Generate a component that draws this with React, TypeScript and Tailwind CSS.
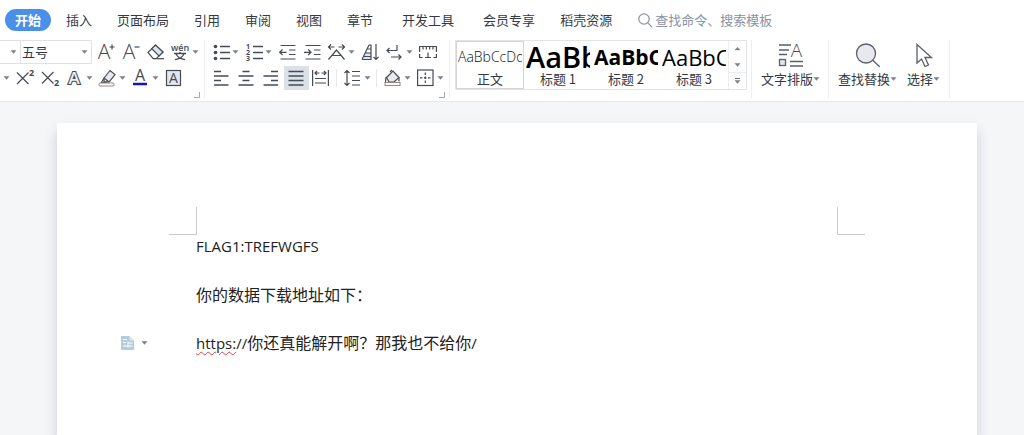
import type { ReactNode } from 'react';
import clsx from 'clsx';

interface ToolProps {
  label: string;
  caret?: boolean;
  active?: boolean;
  children: ReactNode;
}

interface GalleryStyle {
  name: string;
  sample: string;
  preview: string;
}

const TABS = [
  { label: '插入' },
  { label: '页面布局' },
  { label: '引用' },
  { label: '审阅' },
  { label: '视图' },
  { label: '章节' },
  { label: '开发工具', spaced: true },
  { label: '会员专享', spaced: true },
  { label: '稻壳资源' },
];

const STYLES: GalleryStyle[] = [
  { name: '正文', sample: 'AaBbCcDd', preview: 'text-sm font-light text-[#111]' },
  { name: '标题 1', sample: 'AaBb', preview: 'text-[29px] font-semibold text-black' },
  { name: '标题 2', sample: 'AaBbC', preview: 'text-[21px] font-bold text-black' },
  { name: '标题 3', sample: 'AaBbC', preview: 'text-[22px] font-medium text-black' },
];

function Caret() {
  return (
    <svg width="7" height="4" viewBox="0 0 7 4" className="shrink-0" aria-hidden="true">
      <path d="M.5 .3h6L3.500 3.700z" fill="#7d828a" />
    </svg>
  );
}

function Icon({ children }: { children: ReactNode }) {
  return (
    <svg
      width="18"
      height="18"
      viewBox="0 0 18 18"
      fill="none"
      stroke="#454b55"
      strokeWidth="1.2"
      className="shrink-0 overflow-visible font-['Open_Sans','Noto_Sans_CJK_SC',sans-serif]"
      aria-hidden="true"
    >
      {children}
    </svg>
  );
}

// Letters inside icons are filled text, not strokes
function Glyph({ x, y, size, weight = 400, children }: { x: number; y: number; size: number; weight?: number; children: string }) {
  return (
    <text x={x} y={y} fontSize={size} fontWeight={weight} textAnchor="middle" fill="#454b55" stroke="none">
      {children}
    </text>
  );
}

function Tool({ label, caret, active, children }: ToolProps) {
  return (
    <button
      type="button"
      aria-label={label}
      aria-pressed={active}
      className={clsx(
        'flex h-6 shrink-0 items-center gap-[2px] pl-[3px]',
        caret ? 'w-[33px]' : 'w-[25px]',
        active && 'bg-[#dce1e8]'
      )}
    >
      <Icon>{children}</Icon>
      {caret && <Caret />}
    </button>
  );
}

function Separator() {
  return <span className="mr-1 ml-[2px] h-[18px] w-px shrink-0 bg-[#e6e8eb]" />;
}

function Launcher({ label }: { label: string }) {
  return (
    <button type="button" aria-label={label} className="mt-[2px] mr-[2px] self-end">
      <svg width="6" height="6" viewBox="0 0 6 6" fill="none" stroke="#a3a8af" aria-hidden="true">
        <path d="M5.5 0v5.5H0" />
      </svg>
    </button>
  );
}

function BigTool({ label, children }: { label: string; children: ReactNode }) {
  return (
    <button type="button" className="flex shrink-0 flex-col items-center gap-px pt-[2px]">
      <svg width="28" height="26" viewBox="0 0 28 26" fill="none" stroke="#5a606a" strokeWidth="1.3" className="overflow-visible font-['Open_Sans',sans-serif]" aria-hidden="true">
        {children}
      </svg>
      <span className="flex items-center text-[13px] leading-5">
        {label}
        <Caret />
      </span>
    </button>
  );
}

function TabBar() {
  return (
    <nav className="flex h-10 items-center gap-[25px] pl-[5px] text-[13px] whitespace-nowrap">
      <button type="button" className="-mr-[10px] h-[22px] w-[46px] rounded-full bg-[#4a90e8] font-bold text-white">
        开始
      </button>
      {TABS.map((tab) => (
        <button key={tab.label} type="button" className={clsx(tab.spaced && 'ml-1')}>
          {tab.label}
        </button>
      ))}
      <label className="flex items-center gap-[2px]">
        <svg width="16" height="16" viewBox="0 0 16 16" fill="none" stroke="#8993a3" strokeWidth="1.2" aria-hidden="true">
          <circle cx="7" cy="7" r="5.2" />
          <path d="M10.8 10.8l4.2 4.2" />
        </svg>
        <input
          type="text"
          aria-label="查找命令、搜索模板"
          placeholder="查找命令、搜索模板"
          className="w-[130px] outline-none placeholder:text-[#8993a3]"
        />
      </label>
    </nav>
  );
}

function FontGroup() {
  return (
    <div className="flex shrink-0 flex-col border-r border-[#eceef0] pr-[2px]">
      <div className="flex h-6 items-center">
        <button type="button" aria-label="字体" className="flex h-6 w-5 items-center justify-end border-y border-[#dfe1e5] pr-[3px]">
          <Caret />
        </button>
        <span className="mr-[2px] flex h-6 w-[72px] items-center border border-[#dfe1e5] pr-[3px]">
          <select aria-label="字号" className="min-w-0 flex-1 appearance-none pl-px text-[13px] outline-none">
            <option>五号</option>
          </select>
          <Caret />
        </span>
        <Tool label="增大字号">
          <Glyph x={7} y={16} size={21} weight={300}>A</Glyph>
          <path d="M15 1.500v5M12.500 4h5" />
        </Tool>
        <Tool label="减小字号">
          <Glyph x={7} y={16} size={21} weight={300}>A</Glyph>
          <path d="M12.500 4h5" />
        </Tool>
        <Tool label="清除格式">
          <path d="M1 9.500L8.500 2l7.500 7-6.500 6.500H6z" />
          <path d="M4.800 5.700L8.500 2l7.500 7-4 4z" fill="#dfe3ea" />
          <path d="M6 15.700h11" />
        </Tool>
        <Tool label="拼音指南" caret>
          <Glyph x={8} y={8} size={9} weight={600}>wén</Glyph>
          <path d="M2 10.500h12M8 9v1.500M4 11c1.500 3 4 4.800 9 5.700M12 11c-1.500 3-4 4.800-9 5.700" strokeWidth="1.300" />
        </Tool>
      </div>
      <div className="mt-[2px] flex h-6 items-center">
        <button type="button" aria-label="更多下划线" className="flex h-6 w-[13px] items-center pl-[3px]">
          <Caret />
        </button>
        <Tool label="上标">
          <path d="M1 3.500l11.500 11.500M12.500 3.500L1 15" />
          <Glyph x={15.5} y={7} size={9} weight={700}>2</Glyph>
        </Tool>
        <Tool label="下标">
          <path d="M1 3l11.500 11.500M12.500 3L1 14.500" />
          <Glyph x={15.5} y={17} size={9} weight={700}>2</Glyph>
        </Tool>
        <Tool label="文字效果" caret>
          <text x="8" y="15" fontSize="17" fontWeight="600" textAnchor="middle" fill="#eef0f3" stroke="#454b55" strokeWidth="2.2" paintOrder="stroke">
            A
          </text>
        </Tool>
        <Tool label="突出显示" caret>
          <path d="M5 9l6-7.500 5 4L10 13l-5-.5z" fill="#e6e9ee" />
          <path d="M5 9l5 4M5 9l-2.500 4.500H8" />
          <rect x="0" y="14" width="15" height="3" rx="1" stroke="#9d8582" fill="#fff" strokeWidth="1" />
        </Tool>
        <Tool label="字体颜色" caret>
          <Glyph x={8} y={12} size={16}>A</Glyph>
          <path d="M1 15h14" stroke="#1212c8" strokeWidth="2.500" />
        </Tool>
        <Tool label="字符底纹">
          <rect x="1.500" y="1.500" width="14" height="15" fill="#e3e6eb" />
          <Glyph x={8.5} y={14} size={14}>A</Glyph>
        </Tool>
      </div>
      <Launcher label="字体设置" />
    </div>
  );
}

function ParagraphGroup() {
  return (
    <div className="flex shrink-0 flex-col border-r border-[#eceef0] pr-[2px] pl-1">
      <div className="flex h-6 items-center">
        <Tool label="项目符号" caret>
          <path d="M8 3.500h10M8 9.500h10M8 15.500h10" strokeWidth="1.400" />
          <g fill="#454b55" stroke="none">
            <circle cx="3.500" cy="3.500" r="1.800" />
            <circle cx="3.500" cy="9.500" r="1.800" />
            <circle cx="3.500" cy="15.500" r="1.800" />
          </g>
        </Tool>
        <Tool label="编号" caret>
          <path d="M8 3.500h10M8 9.500h10M8 15.500h10" strokeWidth="1.400" />
          <Glyph x={3} y={6} size={7} weight={700}>1</Glyph>
          <Glyph x={3} y={12} size={7} weight={700}>2</Glyph>
          <Glyph x={3} y={18} size={7} weight={700}>3</Glyph>
        </Tool>
        <Tool label="减少缩进量">
          <path d="M2.500 2.500h15M11 7h6.500M11 11.500h6.500M2.500 16h15M1.500 9.300h7M4.500 6.500L1.700 9.300 4.500 12" />
        </Tool>
        <Tool label="增加缩进量">
          <path d="M2.500 2.500h15M11 7h6.500M11 11.500h6.500M2.500 16h15M1 9.300h7M5.200 6.500L8 9.300 5.200 12" />
        </Tool>
        <Tool label="中文版式" caret>
          <path d="M.5 4h6M3 1.500L.5 4 3 6.500M10.500 4h6M14 1.500L16.500 4 14 6.500" />
          <path d="M.5 16.500L8.500 7l8 9.500M4 12.500h9" />
        </Tool>
        <Tool label="排序">
          <path d="M2.500 13.500L4.500 10H10v6.500H1.500z" fill="#dfe3ea" stroke="none" />
          <path d="M1 16.500L8 2h2v14.500H1M4 10h6M6 6h4M2.500 13.500H10" />
          <path d="M15 1v15.500M12.500 14l2.500 2.500 2.500-2.500" />
        </Tool>
        <Tool label="换行" caret>
          <path d="M11 2v5.500H1M3.500 5L1 7.500 3.500 10M5 14h10M12.500 11.500L15 14l-2.500 2.500" />
        </Tool>
        <Tool label="制表位">
          <path d="M.6 9V3.500h16.800V9M4 3.500v3M7.300 3.500v3M10.600 3.500v3M14 3.500v3M.6 11v3.500h3M17.400 11v3.500h-3M9 9.500v5M6 14.500h6" />
        </Tool>
      </div>
      <div className="mt-[2px] flex h-6 items-center">
        <Tool label="左对齐">
          <path d="M2 2.500h7M2 7h14.500M2 11.500h7M2 16h14.500" strokeWidth="1.400" />
        </Tool>
        <Tool label="居中对齐">
          <path d="M5.500 2.500h7M1.500 7h15M5.500 11.500h7M1.500 16h15" strokeWidth="1.400" />
        </Tool>
        <Tool label="右对齐">
          <path d="M9 2.500h7M1.500 7H16M9 11.500h7M1.500 16H16" strokeWidth="1.400" />
        </Tool>
        <Tool label="两端对齐" active>
          <path d="M1.500 2.500h15M1.500 7h15M1.500 11.500h15M1.500 16h15" strokeWidth="1.400" />
        </Tool>
        <Tool label="分散对齐">
          <path d="M.6 1v16M16.400 1v16M3 4h4.500M5 2L3 4l2 2M9.500 4H14M12 2l2 2-2 2M3 9.500h11M3 14h11" />
        </Tool>
        <Separator />
        <Tool label="行距" caret>
          <path d="M3 1.500v15M.5 4L3 1.500 5.500 4M.5 14L3 16.500 5.500 14M8 2.500h8M8 7h8M8 11.500h8M8 16h8" />
        </Tool>
        <Separator />
        <Tool label="底纹颜色" caret>
          <path d="M2.500 8.500L9 2l6 6.500-5 4.500H5z" fill="#e6e9ee" />
          <path d="M6 3l2-2M2 8l-.5 5M15 8.500v4" />
          <rect x="1" y="13.500" width="15" height="3" stroke="#9d8582" fill="#fff" strokeWidth="1" />
        </Tool>
        <Tool label="边框" caret>
          <rect x=".6" y="1" width="15.400" height="15.500" />
          <path d="M8.300 3.500v10.500M3 8.800h10.600" strokeDasharray="2.500 1.500" />
        </Tool>
      </div>
      <Launcher label="段落设置" />
    </div>
  );
}

function StyleGallery() {
  return (
    <div className="shrink-0 border-r border-[#eceef0] pr-1 pl-[5px]">
      <div className="flex h-[50px] border border-[#e1e3e7]">
        {STYLES.map((style, i) => (
          <button
            key={style.name}
            type="button"
            className={clsx('flex w-[68px] flex-col overflow-hidden border p-px', i === 0 ? 'border-[#d3d5d8]' : 'border-transparent')}
          >
            <span
              className={clsx(
                "flex h-7 w-full items-center overflow-hidden font-['Open_Sans',sans-serif] leading-[26px] whitespace-nowrap",
                style.preview
              )}
            >
              {style.sample}
            </span>
            <span className="w-full text-center text-[13px] leading-4">{style.name}</span>
          </button>
        ))}
        <div className="flex w-[18px] flex-col border-l border-[#eceef0]">
          <button type="button" aria-label="上一行" className="flex flex-1 rotate-180 items-center justify-center">
            <Caret />
          </button>
          <button type="button" aria-label="下一行" className="flex flex-1 items-center justify-center">
            <Caret />
          </button>
          <button type="button" aria-label="更多样式" className="flex flex-1 flex-col items-center justify-center gap-px border-t border-[#eceef0]">
            <span className="h-px w-[5px] bg-[#6f747c]" />
            <Caret />
          </button>
        </div>
      </div>
    </div>
  );
}

function Ribbon() {
  return (
    <div className="flex h-[62px] border-b border-[#e6e8ea] pb-[3px]">
      <FontGroup />
      <ParagraphGroup />
      <StyleGallery />
      <div className="flex shrink-0 items-start border-r border-[#eceef0] pr-2 pl-[9px]">
        <BigTool label="文字排版">
          <path d="M2 3h12M2 8h10M2 12.500h8M13 19.500h13M13 24h13" />
          <rect x="2.500" y="17.500" width="6" height="6" fill="#e3e6eb" />
          <text x="19.500" y="15" fontSize="19" fontWeight="300" textAnchor="middle" fill="#454b55" stroke="none">
            A
          </text>
        </BigTool>
      </div>
      <div className="flex shrink-0 items-start gap-[10px] border-r border-[#eceef0] pr-[9px] pl-[9px]">
        <BigTool label="查找替换">
          <circle cx="12" cy="11.500" r="9.500" fill="#e6e9ee" />
          <path d="M18.700 18.200l7 6.500" />
        </BigTool>
        <BigTool label="选择">
          <path d="M7 2.500v18.500l4.500-4 3.500 7.500 3.500-1.500-3.500-7.500h6.500z" fill="#fff" />
        </BigTool>
      </div>
    </div>
  );
}

function Latin({ children, misspelled }: { children: string; misspelled?: boolean }) {
  return (
    <span
      className={clsx(
        "font-['Open_Sans',sans-serif] text-[15px]",
        misspelled && 'underline decoration-[#e0454a] decoration-wavy decoration-1 underline-offset-2'
      )}
    >
      {children}
    </span>
  );
}

function DocumentPage() {
  return (
    <main className="mt-[21px] mr-[47px] ml-[57px] flex-1 bg-white pt-[84px] shadow-[0_8px_12px_rgba(60,70,85,0.22)]">
      {/* Margin crop marks */}
      <div className="flex justify-between px-28">
        <span className="size-7 border-r border-b border-[#c9cbce]" />
        <span className="size-7 border-b border-l border-[#c9cbce]" />
      </div>
      <div className="flex flex-col gap-7 text-base leading-5 whitespace-nowrap text-[#222]">
        <p className="pl-[139px]">
          <Latin>FLAG1:TREFWGFS</Latin>
        </p>
        <p className="pl-[139px]">你的数据下载地址如下：</p>
        <div className="flex items-center">
          <div className="w-[139px] shrink-0 pl-[63px]">
            <button type="button" aria-label="粘贴选项" className="flex items-center gap-[6px]">
              <svg width="15" height="16" viewBox="0 0 15 16" aria-hidden="true">
                <path d="M1 1h8.500L14 5.500V15H1z" fill="#b5cbe0" />
                <path d="M9.500 1v4.500H14" fill="#dce8f2" />
                <path d="M3 4.500h4M3 7.500h3M3 11h5M8 8h4.500M8 11h4.500M8 6.500v6" stroke="#fff" fill="none" />
              </svg>
              <Caret />
            </button>
          </div>
          <p>
            <Latin misspelled>https:</Latin>
            <Latin>//</Latin>
            你还真能解开啊？那我也不给你
            <Latin>/</Latin>
          </p>
        </div>
      </div>
    </main>
  );
}

export default function App() {
  return (
    <div className="flex min-h-screen flex-col overflow-hidden bg-[#f4f6f8] font-['Noto_Sans_CJK_SC',sans-serif] text-[#343a44]">
      <header className="bg-white">
        <TabBar />
        <Ribbon />
      </header>
      <DocumentPage />
    </div>
  );
}
